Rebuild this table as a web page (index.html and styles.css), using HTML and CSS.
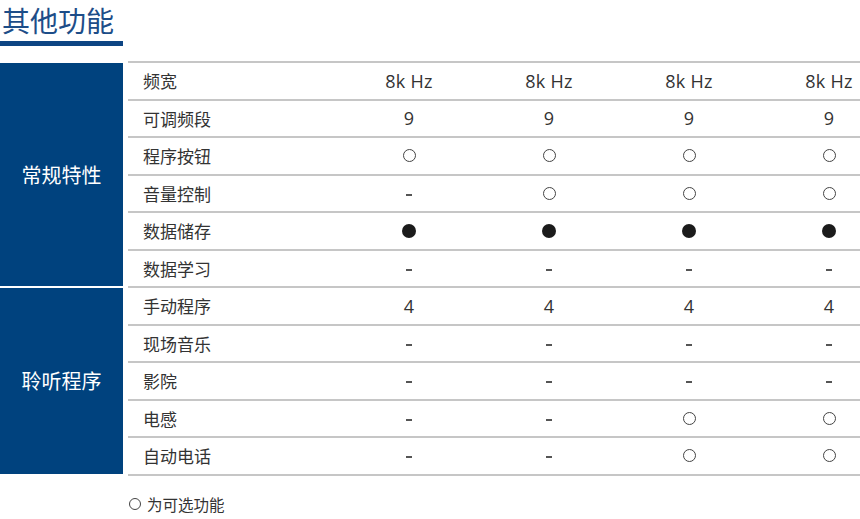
FILE: index.html
```html
<!DOCTYPE html>
<html lang="zh-CN">
<head>
<meta charset="utf-8">
<title>其他功能</title>
<link rel="stylesheet" href="styles.css">
</head>
<body>
<div class="page">
  <h1 class="title">其他功能</h1>
  <div class="rule"></div>
  <div class="spec">
    <section class="group group-first">
      <div class="group-name">常规特性</div>
      <div class="rows">
        <div class="row"><div class="label">频宽</div><div class="val">8k Hz</div><div class="val">8k Hz</div><div class="val">8k Hz</div><div class="val">8k Hz</div></div>
        <div class="row"><div class="label">可调频段</div><div class="val">9</div><div class="val">9</div><div class="val">9</div><div class="val">9</div></div>
        <div class="row"><div class="label">程序按钮</div><div class="val"><span class="opt"></span></div><div class="val"><span class="opt"></span></div><div class="val"><span class="opt"></span></div><div class="val"><span class="opt"></span></div></div>
        <div class="row"><div class="label">音量控制</div><div class="val"><span class="no"></span></div><div class="val"><span class="opt"></span></div><div class="val"><span class="opt"></span></div><div class="val"><span class="opt"></span></div></div>
        <div class="row"><div class="label">数据储存</div><div class="val"><span class="std"></span></div><div class="val"><span class="std"></span></div><div class="val"><span class="std"></span></div><div class="val"><span class="std"></span></div></div>
        <div class="row"><div class="label">数据学习</div><div class="val"><span class="no"></span></div><div class="val"><span class="no"></span></div><div class="val"><span class="no"></span></div><div class="val"><span class="no"></span></div></div>
      </div>
    </section>
    <section class="group">
      <div class="group-name">聆听程序</div>
      <div class="rows">
        <div class="row"><div class="label">手动程序</div><div class="val">4</div><div class="val">4</div><div class="val">4</div><div class="val">4</div></div>
        <div class="row"><div class="label">现场音乐</div><div class="val"><span class="no"></span></div><div class="val"><span class="no"></span></div><div class="val"><span class="no"></span></div><div class="val"><span class="no"></span></div></div>
        <div class="row"><div class="label">影院</div><div class="val"><span class="no"></span></div><div class="val"><span class="no"></span></div><div class="val"><span class="no"></span></div><div class="val"><span class="no"></span></div></div>
        <div class="row"><div class="label">电感</div><div class="val"><span class="no"></span></div><div class="val"><span class="no"></span></div><div class="val"><span class="opt"></span></div><div class="val"><span class="opt"></span></div></div>
        <div class="row"><div class="label">自动电话</div><div class="val"><span class="no"></span></div><div class="val"><span class="no"></span></div><div class="val"><span class="opt"></span></div><div class="val"><span class="opt"></span></div></div>
      </div>
    </section>
  </div>
  <p class="note"><span class="opt opt-small"></span>为可选功能</p>
</div>
</body>
</html>
```
FILE: styles.css
```css
html, body {
  margin: 0;
  padding: 0;
  background: #fff;
  overflow: hidden;
}
body {
  font-family: "Open Sans", "Noto Sans CJK SC", sans-serif;
  color: #333;
}
.page {
  width: 900px;
}
.title {
  margin: 0;
  padding-left: 2px;
  height: 41px;
  font-size: 28px;
  line-height: 41px;
  font-weight: 400;
  color: #1d4d88;
  font-family: "Noto Sans CJK SC", sans-serif;
}
.rule {
  width: 123px;
  height: 5px;
  background: #0d4583;
}
.spec {
  margin-top: 15px;
}
.group {
  display: flex;
  gap: 5px;
}
.group-name {
  flex: 0 0 123px;
  margin-bottom: 2px;
  background: #00427e;
  color: #fff;
  font-family: "Noto Sans CJK SC", sans-serif;
  font-size: 20px;
  display: flex;
  align-items: center;
  justify-content: center;
}
.group-first .group-name {
  margin-top: 2px;
}
.group-first .rows {
  border-top: 2px solid #c6c6c6;
}
.rows {
  flex: 0 0 771px;
}
.row {
  display: grid;
  grid-template-columns: 211px repeat(4, 140px);
  height: 37.5px;
  box-sizing: border-box;
  border-bottom: 2px solid #c6c6c6;
  align-items: center;
}
.label {
  padding-left: 15px;
  font-family: "Noto Sans CJK SC", sans-serif;
  font-size: 17px;
  color: #333;
}
.val {
  display: flex;
  justify-content: center;
  align-items: center;
  font-size: 18px;
  letter-spacing: 0.3px;
  color: #333;
}
.opt {
  display: inline-block;
  width: 11px;
  height: 11px;
  border: 1.3px solid #444;
  border-radius: 50%;
}
.std {
  display: inline-block;
  width: 14px;
  height: 14px;
  border-radius: 50%;
  background: #1b1b1b;
}
.no {
  display: inline-block;
  width: 6px;
  height: 2px;
  margin-top: 3px;
  background: #555;
}
.note {
  margin: 17px 0 0 129px;
  display: flex;
  align-items: center;
  gap: 6px;
  font-family: "Noto Sans CJK SC", sans-serif;
  font-size: 15.5px;
  color: #333;
}
.opt-small {
  width: 10px;
  height: 10px;
}
```
